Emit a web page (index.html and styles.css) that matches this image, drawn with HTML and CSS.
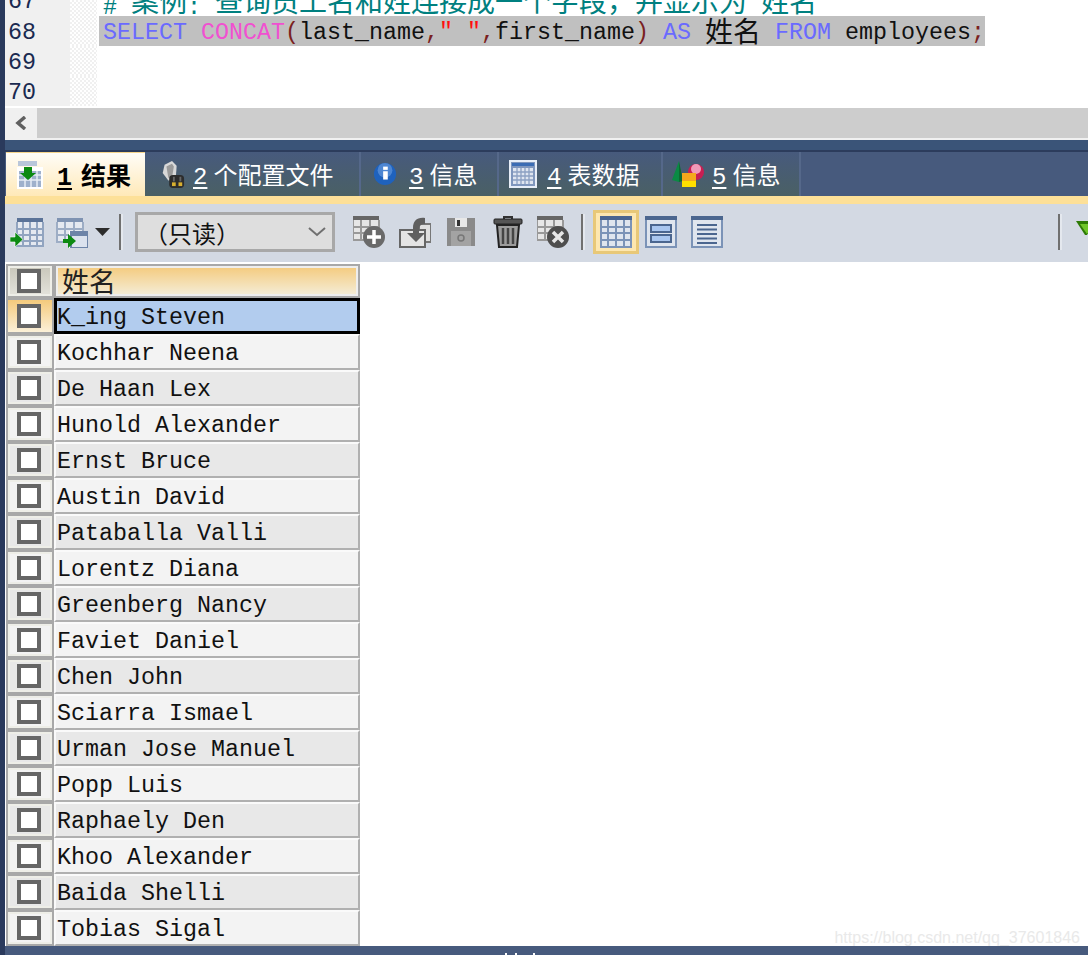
FILE: index.html
```html
<!DOCTYPE html>
<html lang="zh">
<head>
<meta charset="utf-8">
<title>结果</title>
<link rel="stylesheet" href="styles.css">
</head>
<body>
<div class="app">
  <section class="editor">
    <div class="line first"><span class="num">67</span><span class="fold"></span><code class="src cm"># <span class="cjk">案例</span>: <span class="cjk">查询员工名和姓连接成一个字段，并显示为</span> <span class="cjk">姓名</span></code></div>
    <div class="line"><span class="num">68</span><span class="fold"></span><code class="src sel"><span class="kw">SELECT</span> <span class="fn">CONCAT</span><span class="pn">(</span>last_name<span class="pn">,</span><span class="st">" "</span><span class="pn">,</span>first_name<span class="pn">)</span> <span class="kw">AS</span> <span class="cjk">姓名</span> <span class="kw">FROM</span> employees<span class="pn">;</span></code></div>
    <div class="line"><span class="num">69</span><span class="fold"></span></div>
    <div class="line"><span class="num">70</span><span class="fold"></span></div>
  </section>
  <div class="hscroll">
    <span class="scroll-btn"><svg width="14" height="14" viewBox="0 0 14 14"><path d="M11 1 4 7l7 6" fill="none" stroke="#606060" stroke-width="3.5"/></svg></span>
    <span class="scroll-track"></span>
  </div>
  <nav class="tabs">
    <div class="tab active">
      <svg class="ti" width="26" height="28" viewBox="0 0 26 28"><rect x="0" y="6" width="26" height="22" fill="#fff"/><rect x="2" y="10" width="22" height="16" fill="#9fb1cc"/><path d="M2 14h22M2 19h22M8 10v16M14 10v16M20 10v16" stroke="#e8edf5" stroke-width="1.500"/><rect x="1" y="0" width="19" height="5" fill="#b9c6da"/><path d="M7 6h8v6h4l-8 7-8-7h4z" fill="#0c8a12"/></svg>
      <span class="tl"><u>1</u>结果</span>
    </div>
    <div class="tab t2">
      <svg class="ti" width="26" height="30" viewBox="0 0 28 30"><path d="M6 5 14 1l5 5-1 15-8 1-6-8z" fill="#d8d8d8"/><path d="M8 7l6-3 2 3-2 12-4 0z" fill="#9a9a9a"/><rect x="11" y="16" width="16" height="14" rx="4" fill="#2c2c2c"/><rect x="14" y="24" width="4" height="4" fill="#d8b030"/><rect x="21" y="24" width="4" height="4" fill="#d8b030"/><rect x="15" y="18" width="2" height="5" fill="#666"/><rect x="22" y="18" width="2" height="5" fill="#666"/></svg>
      <span class="tl"><u>2</u>个配置文件</span>
    </div>
    <div class="tab t3">
      <svg class="ti" width="24" height="26" viewBox="0 0 26 26"><circle cx="13" cy="13" r="12" fill="#1f62bd"/><circle cx="13" cy="9" r="8" fill="#6c9fe0" opacity=".6"/><rect x="11" y="10" width="5" height="9" fill="#fff"/><rect x="11" y="5" width="5" height="3.500" fill="#fff"/></svg>
      <span class="tl"><u>3</u>信息</span>
    </div>
    <div class="tab t4">
      <svg class="ti" width="28" height="28" viewBox="0 0 28 28"><rect width="28" height="28" fill="#e8eef8"/><rect x="2" y="2" width="24" height="24" fill="#7f96bd"/><rect x="3" y="3" width="22" height="3" fill="#3b6cb4"/><rect x="4" y="8" width="20" height="16" fill="#dfe5f0"/><path d="M8 8v16M12 8v16M16 8v16M20 8v16M4 12h20M4 16h20M4 20h20" stroke="#8ca0c2" stroke-width="1.300"/></svg>
      <span class="tl"><u>4</u>表数据</span>
    </div>
    <div class="tab t5">
      <svg class="ti" width="32" height="26" viewBox="0 0 32 26"><circle cx="24" cy="11" r="8" fill="#c81e52"/><circle cx="24" cy="8" r="5" fill="#f09ab8"/><path d="M7 0 0 19l7 2z" fill="#0a8a44"/><path d="M7 0l4 20-4 1z" fill="#0c6a30"/><rect x="10" y="12" width="14" height="8" fill="#f4a81c"/><rect x="10" y="20" width="14" height="6" fill="#ffe000"/></svg>
      <span class="tl"><u>5</u>信息</span>
    </div>
  </nav>
  <div class="toolbar">
    <svg class="ic i1" width="34" height="32" viewBox="0 0 34 32"><rect x="7" y="2" width="26" height="28" fill="#e5e9f0"/><rect x="7" y="2" width="26" height="4" fill="#5b7398"/><path d="M7 6v24h26V6M7 13h26M7 19h26M7 25h26M13 6v24M20 6v24M27 6v24" fill="none" stroke="#91a4c0" stroke-width="2"/><path d="M0 21h5v-5l8 7.500-8 7.500v-5H0z" fill="#0c8a12" stroke="#fff" stroke-width=".6"/></svg>
    <span class="split">
      <svg class="ic" width="32" height="32" viewBox="0 0 32 32"><rect x="1" y="2" width="26" height="24" fill="#e5e9f0"/><rect x="1" y="2" width="26" height="4" fill="#7f93b2"/><path d="M1 6v20h26V6M1 13h26M1 19h26M9 6v20M18 6v20" fill="none" stroke="#9dadc5" stroke-width="2"/><rect x="13" y="15" width="19" height="17" fill="#fff"/><rect x="15" y="16" width="17" height="16" fill="#dbe2ee" stroke="#6d84a8" stroke-width="2"/><rect x="15" y="16" width="17" height="4" fill="#6d84a8"/><path d="M7 23h5v-5l8 7-8 7v-5H7z" fill="#0c8a12"/></svg>
      <svg class="caret" width="15" height="8" viewBox="0 0 15 8"><path d="M0 0h15L7.500 8z" fill="#2c2c2c"/></svg>
    </span>
    <span class="sep s1"></span>
    <div class="select"><span>（只读）</span><svg width="18" height="10" viewBox="0 0 18 10"><path d="M1 1l8 7 8-7" fill="none" stroke="#707070" stroke-width="2"/></svg></div>
    <svg class="ic i3" width="32" height="32" viewBox="0 0 32 32"><rect y="0" width="26" height="24" fill="#e6e6e6"/><rect y="0" width="26" height="4" fill="#666"/><path d="M0 4v20h26V4M0 11h26M0 17h26M8 4v20M17 4v20" fill="none" stroke="#999" stroke-width="2"/><circle cx="21" cy="21" r="11" fill="#6a6a6a"/><path d="M21 14v14M14 21h14" stroke="#fff" stroke-width="3.500"/></svg>
    <svg class="ic i4" width="32" height="32" viewBox="0 0 32 32"><rect x="20" y="8" width="12" height="18" fill="#e0e0e0" stroke="#777" stroke-width="2"/><rect x="1" y="14" width="25" height="17" fill="#e4e4e4" stroke="#666" stroke-width="2"/><path d="M26 2c-8-1-12 3-12 10v5h-6l9 9 9-9h-6v-4c0-3 2-5 6-5z" fill="#5f5f5f"/></svg>
    <svg class="ic i5" width="28" height="28" viewBox="0 0 28 28"><path d="M0 0h28v28H0z" fill="#8a8a8a"/><rect x="8" y="0" width="12" height="9" fill="#e8e8e8"/><rect x="10" y="2" width="3" height="6" fill="#333"/><rect x="4" y="13" width="20" height="15" fill="#a3a3a3"/><circle cx="14" cy="20" r="3" fill="none" stroke="#777" stroke-width="1.500"/></svg>
    <svg class="ic i6" width="30" height="32" viewBox="0 0 30 32"><path d="M11 3V1h8v2" fill="none" stroke="#333" stroke-width="2"/><rect x="1" y="3" width="28" height="5" rx="1" fill="#555" stroke="#222"/><path d="M4 9h22l-2 22H6z" fill="#9c9c9c" stroke="#222" stroke-width="2"/><path d="M10 12v16M15 12v16M20 12v16" stroke="#444" stroke-width="2.500"/></svg>
    <svg class="ic i7" width="32" height="32" viewBox="0 0 32 32"><rect y="0" width="26" height="24" fill="#e6e6e6"/><rect y="0" width="26" height="4" fill="#666"/><path d="M0 4v20h26V4M0 11h26M0 17h26M8 4v20M17 4v20" fill="none" stroke="#999" stroke-width="2"/><circle cx="21" cy="21" r="11" fill="#4e4e4e"/><path d="M16 16l10 10M26 16 16 26" stroke="#e6e6e6" stroke-width="3.500"/></svg>
    <span class="sep s2"></span>
    <span class="toggle on"><svg width="32" height="32" viewBox="0 0 32 32"><rect width="32" height="32" fill="#dfe5ee"/><rect width="32" height="4" fill="#4b668f"/><path d="M1 4v27h30V4M1 11h30M1 17h30M1 24h30M8 4v27M16 4v27M24 4v27" fill="none" stroke="#7b93b7" stroke-width="2"/></svg></span>
    <span class="toggle"><svg width="32" height="32" viewBox="0 0 32 32"><rect x="1" y="1" width="30" height="30" fill="#dfe5ee" stroke="#7b93b7" stroke-width="2"/><rect width="32" height="4" fill="#4b668f"/><rect x="6" y="9" width="20" height="7" fill="#a9c6ef" stroke="#4b668f" stroke-width="2"/><rect x="6" y="19" width="20" height="7" fill="#a9c6ef" stroke="#4b668f" stroke-width="2"/></svg></span>
    <span class="toggle"><svg width="32" height="32" viewBox="0 0 32 32"><rect x="1" y="1" width="30" height="30" fill="#dfe5ee" stroke="#7b93b7" stroke-width="2"/><rect width="32" height="4" fill="#4b668f"/><path d="M6 9h20M6 13.500h20M6 18h20M6 22.500h20M6 27h20" stroke="#4b668f" stroke-width="2"/></svg></span>
    <span class="sep s3"></span>
    <svg class="funnel" width="18" height="16" viewBox="0 0 18 16"><path d="M0 0h18v1L11 14 9 14z" fill="#2d7a06"/><path d="M4 3h14v1L11 13z" fill="#6fc52a"/></svg>
  </div>
  <section class="result">
    <table class="grid">
      <thead>
        <tr><th class="gut"><span class="cb"></span></th><th class="hd">姓名</th></tr>
      </thead>
      <tbody>
        <tr class="cur"><td class="gut"><span class="cb"></span></td><td>K_ing Steven</td></tr>
        <tr><td class="gut"><span class="cb"></span></td><td>Kochhar Neena</td></tr>
        <tr><td class="gut"><span class="cb"></span></td><td>De Haan Lex</td></tr>
        <tr><td class="gut"><span class="cb"></span></td><td>Hunold Alexander</td></tr>
        <tr><td class="gut"><span class="cb"></span></td><td>Ernst Bruce</td></tr>
        <tr><td class="gut"><span class="cb"></span></td><td>Austin David</td></tr>
        <tr><td class="gut"><span class="cb"></span></td><td>Pataballa Valli</td></tr>
        <tr><td class="gut"><span class="cb"></span></td><td>Lorentz Diana</td></tr>
        <tr><td class="gut"><span class="cb"></span></td><td>Greenberg Nancy</td></tr>
        <tr><td class="gut"><span class="cb"></span></td><td>Faviet Daniel</td></tr>
        <tr><td class="gut"><span class="cb"></span></td><td>Chen John</td></tr>
        <tr><td class="gut"><span class="cb"></span></td><td>Sciarra Ismael</td></tr>
        <tr><td class="gut"><span class="cb"></span></td><td>Urman Jose Manuel</td></tr>
        <tr><td class="gut"><span class="cb"></span></td><td>Popp Luis</td></tr>
        <tr><td class="gut"><span class="cb"></span></td><td>Raphaely Den</td></tr>
        <tr><td class="gut"><span class="cb"></span></td><td>Khoo Alexander</td></tr>
        <tr><td class="gut"><span class="cb"></span></td><td>Baida Shelli</td></tr>
        <tr><td class="gut"><span class="cb"></span></td><td>Tobias Sigal</td></tr>
      </tbody>
    </table>
    <span class="watermark">https://blog.csdn.net/qq_37601846</span>
  </section>
  <footer class="bottom"><i class="tick"></i><i class="tick"></i><i class="tick"></i></footer>
</div>
</body>
</html>
```
FILE: styles.css
```css
* { box-sizing: border-box; }
html, body { margin: 0; padding: 0; height: 955px; overflow: hidden; background: #fff; }
body { font-family: "Liberation Mono", monospace; }
.app { width: 1088px; height: 955px; border-left: 5px solid #2a3a5c; display: flex; flex-direction: column; overflow: hidden; }

.editor { height: 106px; flex: none; background: #fff; overflow: hidden; }
.line { height: 30px; display: flex; align-items: center; font-size: 23.33px; line-height: 30px; }
.line.first { height: 16px; align-items: flex-end; }
.num { width: 65px; height: 30px; flex: none; background: #f0f0f0; color: #1a2a50; padding: 2px 0 0 3px; white-space: nowrap; }
.line.first .num, .line.first .fold { height: 16px; line-height: 0; padding-top: 2px; }
.fold { width: 27px; height: 30px; margin-right: 2px; flex: none; background: repeating-conic-gradient(#f0f0f0 0 25%, #fff 0 50%) 0 0 / 4px 4px; }
.src { font: inherit; white-space: pre; padding-left: 4px; color: #111; height: 30px; }
.src.cm { color: #008080; height: 16px; line-height: 0; padding-top: 0; }
.src.sel { background: #c0c0c0; width: 886px; line-height: 28px; padding-top: 3px; }
.kw { color: #6a6aff; }
.fn { color: #f050d0; }
.pn { color: #7a2020; }
.st { color: #ff1010; }
.cjk { font-family: "Noto Sans CJK SC", sans-serif; font-size: 28px; line-height: 0; vertical-align: -3px; }
.cm .cjk { vertical-align: 2px; }

.hscroll { height: 32px; margin-top: 2px; flex: none; display: flex; border-bottom: 2px solid #f0f0f0; }
.scroll-btn { width: 32px; background: #f0f0f0; display: flex; align-items: center; justify-content: center; }
.scroll-track { flex: 1; background: #cdcdcd; }

.tabs { height: 64px; flex: none; display: flex; background: linear-gradient(#3a5478 0 10px, #2c3c5c 10px 12px, #475a7d 12px 56px, #fde098 56px); padding: 12px 0 8px 1px; font-family: "Noto Sans CJK SC", sans-serif; }
.tab { height: 44px; display: flex; align-items: center; color: #fff; background: linear-gradient(#475a7d, #4a6064); border-right: 2px solid #55688a; white-space: nowrap; }
.tab.active { width: 139px; padding-left: 11px; background: linear-gradient(#fffdf8, #ffe9b8); color: #000; font-weight: 700; border-right: 0; border-top: 1px solid #f6d48a; }
.active .ti { margin-right: 14px; }
.t2 { width: 216px; padding-left: 14px; }
.t2 .ti { margin-right: 8px; }
.t3 { width: 138px; padding-left: 12px; }
.t3 .ti { margin-right: 12px; }
.t4 { width: 164px; padding-left: 10px; }
.t4 .ti { margin-right: 10px; }
.t5 { width: 138px; padding-left: 9px; }
.t5 .ti { margin-right: 8px; }
.ti { flex: none; }
.tl { font-size: 24px; line-height: 40px; margin-top: 4px; }
.active .tl { font-size: 25px; }
.tl u { font-family: "Liberation Mono", monospace; font-weight: 400; margin-right: 6px; text-underline-offset: 3px; }
.active .tl u { margin-right: 9px; font-weight: 700; }

.toolbar { height: 58px; flex: none; background: #d3d9e3; display: flex; align-items: center; padding: 0 0 2px 5px; }
.ic { flex: none; display: block; }
.split { display: flex; align-items: center; margin-left: 12px; }
.caret { margin-left: 7px; }
.sep { width: 2px; height: 36px; background: #707070; box-shadow: 2px 0 0 #e4e8ee; flex: none; }
.s1 { margin-left: 9px; }
.select { width: 200px; height: 40px; margin-left: 14px; background: #dedede; border: 3px solid #a8a8a8; display: flex; align-items: center; justify-content: space-between; padding: 0 6px 0 6px; font: 24px "Noto Sans CJK SC", sans-serif; color: #111; flex: none; }
.i3 { margin-left: 18px; }
.i4 { margin-left: 14px; }
.i5 { margin-left: 16px; }
.i6 { margin-left: 18px; }
.i7 { margin-left: 14px; }
.s2 { margin-left: 12px; }
.toggle { width: 46px; height: 44px; display: flex; align-items: center; justify-content: center; flex: none; }
.toggle.on { margin: 0 -1px 0 10px; background: #fde7b0; border: 3px solid #e8c878; }
.s3 { margin-left: 328px; }
.funnel { margin-left: 16px; flex: none; align-self: flex-start; margin-top: 17px; }

.result { position: relative; height: 684px; flex: none; padding: 2px 0 0 1px; background: #fff; overflow: hidden; }
.grid { border-collapse: separate; border-spacing: 0; table-layout: fixed; width: 354px; background: #a8a8a8; font-size: 23.33px; color: #111; }
.grid th, .grid td { height: 36px; padding: 4px 0 0 1px; border-style: solid; border-width: 2px; border-color: #fafafa #b0b0b0 #b0b0b0 #fafafa; text-align: left; font-weight: 400; white-space: pre; line-height: 28px; overflow: hidden; }
.grid thead th { height: 34px; line-height: 26px; padding-top: 0; }
.grid .gut { width: 48px; padding: 0 3px 0 0; background: linear-gradient(#c8c6ba, #e4e3dc); border-color: #a8a8a8; box-shadow: inset 0 0 0 2px #eeeee8; }
.cb { display: block; width: 24px; height: 24px; margin: 0 auto; background: #fff; border: 4.5px solid #666; }
.grid .hd { background: linear-gradient(#f4ca7c, #f4eeda); font-family: "Noto Sans CJK SC", sans-serif; font-size: 27px; color: #222; padding: 0 0 0 6px; border-color: #a8a8a8; box-shadow: inset 0 0 0 2px #eee; }
.grid tbody tr:nth-child(even) td { background: #f3f3f3; }
.grid tbody tr:nth-child(odd) td { background: #e8e8e8; }
.grid tbody tr.cur .gut { background: linear-gradient(#f4ca7c, #fbf0d8); border-color: #a8a8a8; box-shadow: none; }
.grid tbody tr.cur td:last-child { background: #b2ccee; border: 3px solid #000; padding: 4px 0 0 0; line-height: 26px; }
.watermark { position: absolute; right: 8px; bottom: -1px; font: 16px/18px "Liberation Sans", sans-serif; color: #e9e9e9; }

.bottom { flex: 1; background: #475a7d; display: flex; align-items: flex-end; gap: 8px; padding-left: 500px; }
.tick { width: 2px; height: 2px; background: #fff; }
.tick:last-child { margin-left: 8px; }
```
